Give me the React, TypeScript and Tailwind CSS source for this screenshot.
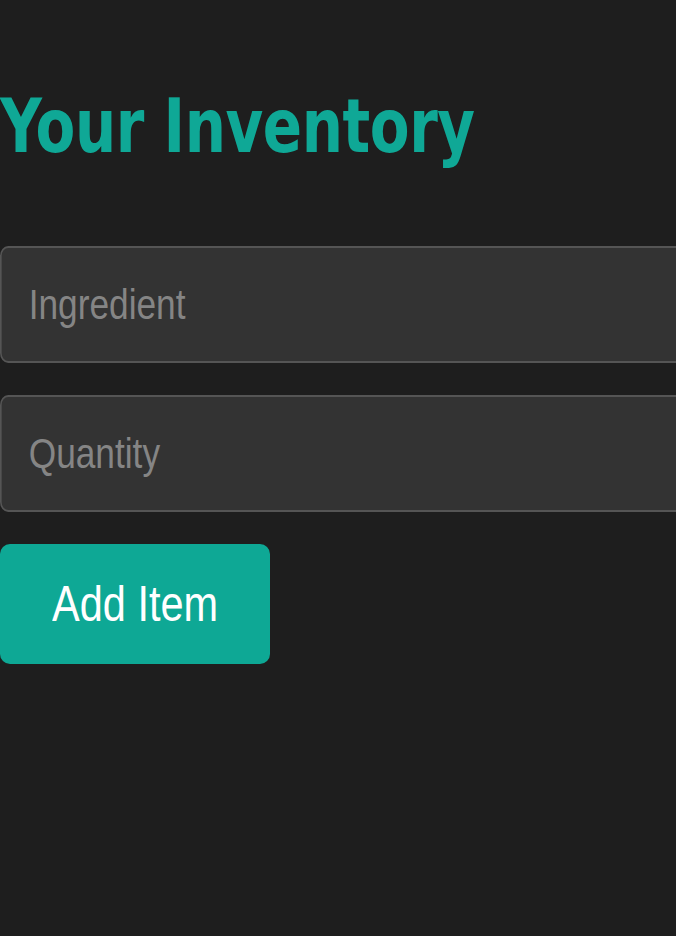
export default function App() {
  const inputClass =
    "h-[117px] w-[880px] origin-left scale-x-[0.82] rounded-[10px] border-2 border-[#555555] bg-[#333333] pl-[33px] text-[43px] text-white placeholder:text-[#858585] outline-none font-['Liberation_Sans',Arial,sans-serif]";

  return (
    <div className="min-h-[936px] w-[676px] overflow-hidden bg-[#1e1e1e]">
      <div className="pt-[78px]">
        <h1 className="text-[74px] leading-[96px] font-bold text-[#0fa896] font-['DejaVu_Sans_Condensed','DejaVu_Sans',Verdana,sans-serif] tracking-[-0.5px] whitespace-nowrap">
          <span className="inline-block origin-left scale-x-[0.87]">Your Inventory</span>
        </h1>
        <form className="mt-[72px] flex flex-col gap-[32px]" onSubmit={(e) => e.preventDefault()}>
          <input type="text" placeholder="Ingredient" className={inputClass} />
          <input type="text" placeholder="Quantity" className={inputClass} />
          <button
            type="submit"
            className="h-[120px] w-[270px] rounded-[10px] bg-[#0ea895] text-[50px] text-white font-['Liberation_Sans',Arial,sans-serif]"
          >
            <span className="inline-block scale-x-[0.83]">Add Item</span>
          </button>
        </form>
      </div>
    </div>
  );
}
